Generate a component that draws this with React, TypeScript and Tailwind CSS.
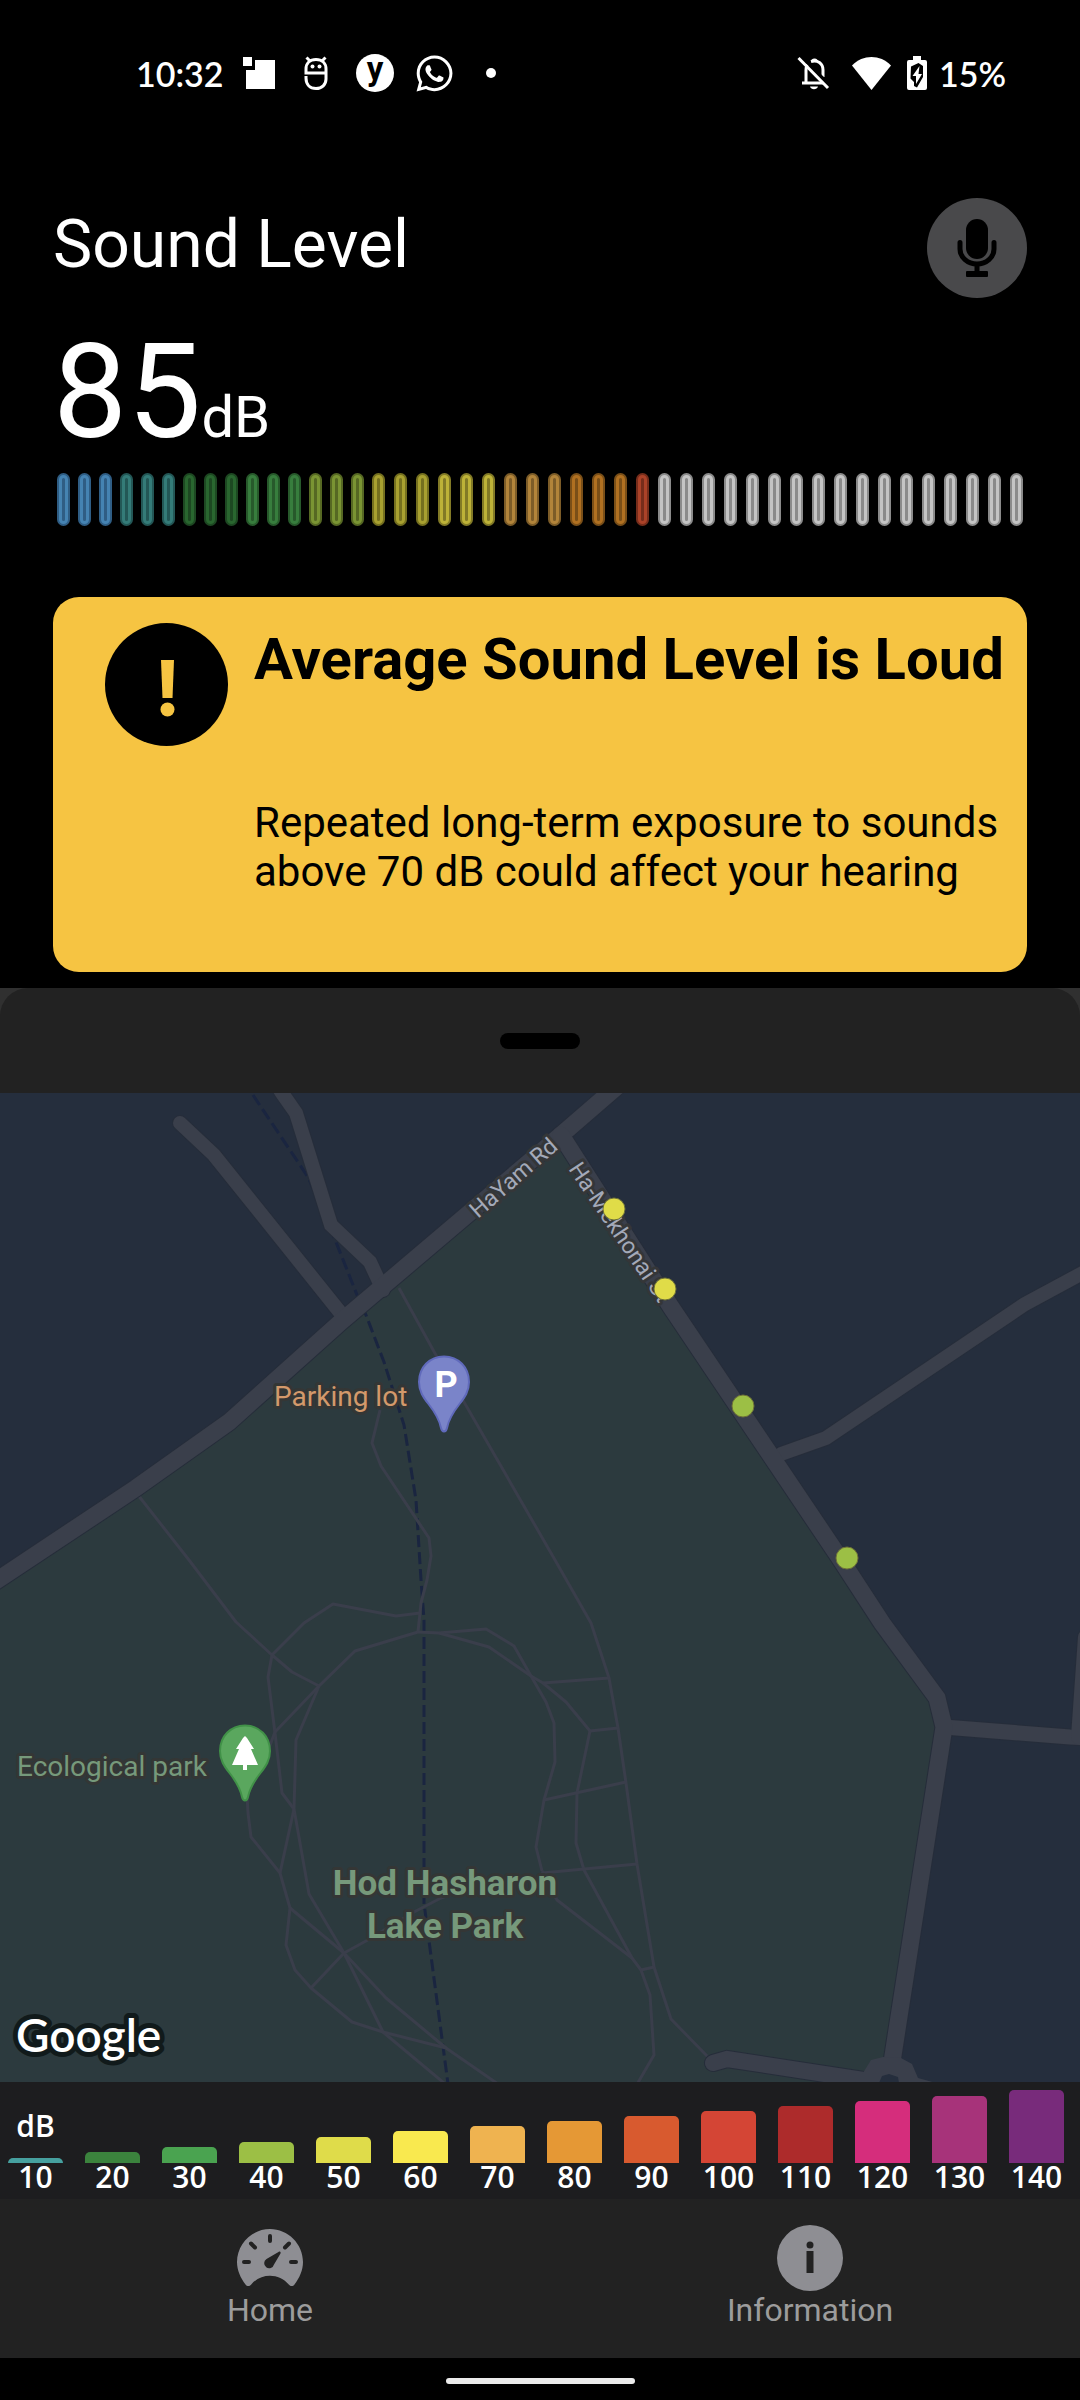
import { FaWhatsapp } from "react-icons/fa";

type Tone = { outer: string; ring: string };

const TONES: Record<string, Tone> = {
  blue: { outer: "border-[#2f5d84] bg-[#2f5d84]", ring: "border-[#4583b2]" },
  teal: { outer: "border-[#235756] bg-[#235756]", ring: "border-[#347b78]" },
  forest: { outer: "border-[#1d4822] bg-[#1d4822]", ring: "border-[#29662f]" },
  green: { outer: "border-[#27592b] bg-[#27592b]", ring: "border-[#377d3d]" },
  olive: { outer: "border-[#566823] bg-[#566823]", ring: "border-[#7a9433]" },
  lime: { outer: "border-[#75701f] bg-[#75701f]", ring: "border-[#a8a030]" },
  yellow: { outer: "border-[#827a26] bg-[#827a26]", ring: "border-[#bdb238]" },
  tan: { outer: "border-[#7c5c28] bg-[#7c5c28]", ring: "border-[#b2843a]" },
  orange: { outer: "border-[#7a4f18] bg-[#7a4f18]", ring: "border-[#b07021]" },
  red: { outer: "border-[#762d1b] bg-[#762d1b]", ring: "border-[#ab4228]" },
  off: { outer: "border-[#8a8a8a] bg-[#8a8a8a]", ring: "border-[#c4c4c4]" },
};

const times = (n: number, tone: string) => Array<string>(n).fill(tone);

const LOW_TICKS = [
  ...times(3, "blue"),
  ...times(3, "teal"),
  ...times(3, "forest"),
  ...times(3, "green"),
  ...times(3, "olive"),
  ...times(1, "lime"),
];

const HIGH_TICKS = [
  ...times(2, "lime"),
  ...times(3, "yellow"),
  ...times(3, "tan"),
  ...times(3, "orange"),
  ...times(1, "red"),
  ...times(17, "off"),
];

const LEGEND = [
  { label: "10", bar: "h-[5px] bg-[#46a09f]" },
  { label: "20", bar: "h-[11px] bg-[#3b833d]" },
  { label: "30", bar: "h-[16px] bg-[#4aa350]" },
  { label: "40", bar: "h-[21px] bg-[#9cbf45]" },
  { label: "50", bar: "h-[26px] bg-[#dfdc4a]" },
  { label: "60", bar: "h-[32px] bg-[#f9e94f]" },
  { label: "70", bar: "h-[37px] bg-[#efb350]" },
  { label: "80", bar: "h-[42px] bg-[#e59835]" },
  { label: "90", bar: "h-[47px] bg-[#d85a2f]" },
  { label: "100", bar: "h-[52px] bg-[#d44535]" },
  { label: "110", bar: "h-[57px] bg-[#ad2b2b]" },
  { label: "120", bar: "h-[62px] bg-[#d52d7c]" },
  { label: "130", bar: "h-[67px] bg-[#a7337a]" },
  { label: "140", bar: "h-[73px] bg-[#782b7b]" },
];

const ROADS = [
  { d: "M180 1123L214 1155L343 1316", w: 14 },
  { d: "M275 1082L282 1093L296 1113L331 1225L370 1262L383 1290", w: 14 },
  { d: "M781 1454L826 1438L1025 1304L1090 1269", w: 14 },
  { d: "M944 1727L1070 1737L1090 1738", w: 15 },
  { d: "M1085 1637L1078 1737", w: 14 },
  { d: "M713 2063L727 2059L870 2081", w: 16 },
  { d: "M-10 1585L136 1488L229 1422L343 1320L561 1135L650 1058", w: 17 },
  { d: "M561 1135L671 1307L841 1560L882 1623L937 1698L944 1727L892 2062", w: 17 },
];

const PATHS = [
  "M399 1288L437 1357L464 1402L555 1560L591 1623L609 1678L618 1728L626 1783L637 1864L654 1967L671 2019L708 2057",
  "M138 1495L189 1560L236 1622L272 1655L292 1672L319 1686",
  "M380 1410L372 1443L381 1466L429 1538L431 1556L427 1580L421 1603L418 1632",
  "M420 1613L396 1616L333 1604L304 1623L272 1655L268 1677L275 1733L282 1793L294 1809",
  "M418 1632L355 1651L319 1686L296 1740L294 1809L309 1894L344 1953L383 2032L450 2088",
  "M319 1686L275 1732L266 1756L247 1795L248 1813L251 1837L280 1873L290 1908L286 1945L295 1970L311 1988L352 2022L383 2032L446 2048L498 2084",
  "M294 1809L280 1873",
  "M290 1908L344 1953L386 1998L446 2048",
  "M311 1988L344 1953L366 1941L414 1912L441 1898L470 1888",
  "M542 1871L557 1900L632 1958",
  "M418 1632L439 1633L486 1629L514 1646L531 1676L546 1702L554 1723L555 1762L544 1800L536 1847L542 1871",
  "M439 1633L489 1647L531 1676L543 1683L566 1702L590 1731L577 1793L576 1843L584 1870L632 1958L641 1970L650 1995L654 2055L636 2086",
  "M543 1683L609 1678",
  "M590 1731L618 1728",
  "M544 1800L626 1782",
  "M542 1873L637 1864",
  "M641 1970L654 1967",
];

const DOTS = [
  { x: 614, y: 1209, fill: "#e0dc48" },
  { x: 665, y: 1289, fill: "#e0dc48" },
  { x: 743, y: 1406, fill: "#9cbf45" },
  { x: 847, y: 1558, fill: "#9cbf45" },
];

function Ticks({ tones }: { tones: string[] }) {
  return (
    <>
      {tones.map((tone, i) => (
        <span key={i} className="flex flex-1 justify-center">
          <span className={`h-[53px] w-[13px] rounded-full border-2 ${TONES[tone].outer}`}>
            <span className={`block h-full w-full rounded-full border-3 ${TONES[tone].ring}`} />
          </span>
        </span>
      ))}
    </>
  );
}

function StatusBar() {
  return (
    <header className="flex h-[146px] items-center justify-between pl-[136px] pr-[74px] font-['Lato',sans-serif] text-[34px] font-semibold text-white">
      <div className="flex items-center">
        <span>10:32</span>
        <svg className="ml-[19px] h-8 w-8" viewBox="0 0 32 32" fill="currentColor" aria-hidden="true">
          <path d="M0 0h9v9H0zM12 3h20v29H3V13h9z" />
        </svg>
        <svg className="ml-[29px] h-[34px] w-6" viewBox="0 0 24 34" fill="none" stroke="currentColor" strokeWidth="3" aria-hidden="true">
          <path d="M22 16v-3C22 7 18 3.500 12 3.500S2 7 2 13v4h20V23c0 5.500-4 9.500-10 9.500S2 28.500 2 22v-2M2.500 1.500L6 5M21.500 1.500L18 5" />
          <circle cx="8.500" cy="10.500" r="2" fill="currentColor" stroke="none" />
          <circle cx="15.500" cy="10.500" r="2" fill="currentColor" stroke="none" />
        </svg>
        <svg className="ml-[28px] h-[38px] w-[38px] overflow-visible" viewBox="0 0 38 38" aria-hidden="true">
          <circle cx="19" cy="19" r="19" fill="#fff" />
          <text x="19" y="26" textAnchor="middle" fontFamily="Roboto, sans-serif" fontSize="33" fontWeight="700" fill="#000">y</text>
        </svg>
        <FaWhatsapp className="ml-5 h-[41px] w-[41px]" aria-hidden="true" />
        <span className="ml-[31px] h-[10px] w-[10px] rounded-full bg-white" />
      </div>
      <div className="flex items-center">
        <svg className="h-[34px] w-[33px]" viewBox="0 0 33 34" fill="none" stroke="currentColor" strokeWidth="3" aria-hidden="true">
          <path d="M5 27h21M9 26V14c0-2 .5-4 1.500-5.500M14 5.500c6.500-2 12 2 12 8.500v7" />
          <path d="M14 6a3.500 3.500 0 1 1 7 0zM13 30.500h8c-1 3.500-7 3.500-8 0z" fill="currentColor" stroke="none" />
          <path d="M3.500 0L33 29" stroke="#000" strokeWidth="3" />
          <path d="M1.500 2L31 32" />
        </svg>
        <svg className="ml-[22px] h-[33px] w-[39px]" viewBox="0 0 39 33" fill="currentColor" aria-hidden="true">
          <path d="M0 8.500C11-2.800 28-2.800 39 8.500L19.500 33z" />
        </svg>
        <svg className="ml-4 h-[34px] w-5" viewBox="0 0 20 34" aria-hidden="true">
          <path d="M6 0h8v4h4a2 2 0 0 1 2 2v26a2 2 0 0 1-2 2H2a2 2 0 0 1-2-2V6a2 2 0 0 1 2-2h4z" fill="#fff" />
          <path d="M11.500 7L4 10.500l-.5 12L7 26v4l3 1.500L16 21V10z" fill="#000" />
          <path d="M12.500 10L5.500 20h3.500v8L15 18h-3.500z" fill="#fff" />
        </svg>
        <span className="ml-3">15%</span>
      </div>
    </header>
  );
}

function MicIcon() {
  return (
    <svg className="h-[58px] w-10" viewBox="0 0 40 58" aria-hidden="true">
      <rect x="9" y="0" width="22" height="40" rx="11" />
      <path d="M3 23.500v6.500a17 15 0 0 0 34 0v-6.500" fill="none" stroke="#000" strokeWidth="5" strokeLinecap="round" />
      <path d="M17.500 45h5v8h-5z" />
      <rect x="9" y="52" width="22" height="6" rx="1" />
    </svg>
  );
}

function Pin({ x, y, fill, stroke }: { x: number; y: number; fill: string; stroke: string }) {
  return (
    <path
      transform={`translate(${x} ${y})`}
      d="M0 -25.500C14.500 -25.500 25 -14.500 25 0C25 9 21 15 15.500 22C10 29 5 36 3 46C2 50.500 -2 50.500 -3 46C-5 36 -10 29 -15.500 22C-21 15 -25 9 -25 0C-25 -14.500 -14.500 -25.500 0 -25.500Z"
      fill={fill}
      stroke={stroke}
      strokeWidth="2"
    />
  );
}

function ParkMap() {
  return (
    <svg
      className="block h-auto w-full bg-[#252e3d]"
      viewBox="0 1093 1080 989"
      role="img"
      aria-label="Map of measured sound levels"
      fontFamily="Roboto, sans-serif"
    >
      <path
        d="M0 1578L136 1488L229 1422L343 1320L561 1137L671 1307L841 1560L882 1623L937 1698L944 1727L892 2057L885 2082H0Z"
        fill="#2c3a3e"
      />
      <path
        d="M253 1095L308 1177L334 1237L359 1300L366 1315L384 1362L404 1425L416 1500L421 1580L424 1620V1903L448 2084"
        fill="none"
        stroke="#1a2540"
        strokeWidth="3"
        strokeDasharray="12 5"
      />
      <g fill="none" stroke="#3a3e4b" strokeWidth="3" strokeLinejoin="round">
        {PATHS.map((d) => (
          <path key={d} d={d} />
        ))}
      </g>
      <g fill="none" stroke="#262d3a" strokeLinecap="round">
        {ROADS.map((r) => (
          <path key={r.d} d={r.d} strokeWidth={r.w + 2} />
        ))}
      </g>
      <g fill="none" stroke="#3a3f4b" strokeLinecap="round">
        {ROADS.map((r) => (
          <path key={r.d} d={r.d} strokeWidth={r.w} />
        ))}
      </g>
      <path d="M855 2082L863 2073L871 2060L883 2057L901 2058L912 2064L918 2078L936 2083Z" fill="#3a3f4b" />
      <path d="M879 2083L882 2076L889 2074L898 2077L899 2083Z" fill="#252e3d" />

      <g fill="#a3a9b8" stroke="#343638" strokeWidth="6" strokeLinejoin="round" paintOrder="stroke" fontSize="23">
        <text transform="translate(478 1219) rotate(-41)">HaYam Rd</text>
        <text transform="translate(568 1169) rotate(56)">Ha-Mekhonai St</text>
      </g>
      {DOTS.map((d) => (
        <circle key={d.x} cx={d.x} cy={d.y} r="11" fill={d.fill} stroke="#6d7038" strokeWidth="1" />
      ))}

      <Pin x={444} y={1382} fill="#7a84c9" stroke="#606abb" />
      <text x="446" y="1397" textAnchor="middle" fontSize="36" fontWeight="700" fill="#fff">P</text>
      <Pin x={245} y={1751} fill="#5aa75e" stroke="#419148" />
      <path d="M243 1738l2-2l2 2l7 11h-3l7 16h-11v5h-4v-5h-11l7-16h-3z" fill="#fff" />

      <g stroke="#343635" strokeWidth="6" strokeLinejoin="round" paintOrder="stroke">
        <text x="274" y="1406" fontSize="28" fill="#d3996b">Parking lot</text>
        <text x="17" y="1776" fontSize="28" fill="#76997b">Ecological park</text>
        <g fontSize="35" fontWeight="700" fill="#76997b" textAnchor="middle">
          <text x="445" y="1895">Hod Hasharon</text>
          <text x="445" y="1938">Lake Park</text>
        </g>
      </g>
      <text
        x="16"
        y="2052"
        fontFamily="Lato, sans-serif"
        fontSize="46"
        fontWeight="600"
        fill="#fff"
        stroke="#111a1b"
        strokeWidth="10"
        strokeLinejoin="round"
        paintOrder="stroke"
      >
        Google
      </text>
    </svg>
  );
}

function Legend() {
  return (
    <ul className="flex h-[117px] items-end justify-between bg-[#1d1d1f] pb-2 pl-2 pr-4 font-['Open_Sans',sans-serif] text-[30px] font-semibold leading-7 text-white">
      {LEGEND.map((item, i) => (
        <li key={item.label} className="flex w-[55px] flex-col items-center">
          {i === 0 && <span className="mb-[18px]">dB</span>}
          <span className={`w-full rounded-t-[5px] ${item.bar}`} />
          <span>{item.label}</span>
        </li>
      ))}
    </ul>
  );
}

function GaugeIcon() {
  return (
    <svg className="h-[66px] w-[66px]" viewBox="0 0 66 66" aria-hidden="true">
      <path
        d="M33 4C51 4 66 19 66 37c0 8-3.500 16-8.500 22.500c-1.500 2-4 2-5.500.2c-10-12-28-12-38 0c-1.500 1.800-4 1.800-5.500-.2C3.500 53 0 45 0 37C0 19 15 4 33 4z"
        fill="#8e8e93"
      />
      <path d="M33 11v5M14 18.500l4 4M52 18.500l-4 4M7 37h5M54 37h5" stroke="#222" strokeWidth="4" strokeLinecap="round" />
      <path d="M41.500 27c1.500-1 2.500 0 2 1.500L37 39.500a5 5 0 1 1-7.500-5.500z" fill="#222" />
    </svg>
  );
}

function InfoIcon() {
  return (
    <svg className="h-[66px] w-[66px]" viewBox="0 0 66 66" aria-hidden="true">
      <circle cx="33" cy="33" r="33" fill="#8e8e93" />
      <circle cx="33" cy="20" r="3.500" fill="#222" />
      <rect x="29.500" y="26" width="7" height="22" fill="#222" />
    </svg>
  );
}

export default function App() {
  return (
    <div className="flex min-h-screen flex-col bg-black font-['Roboto',sans-serif]">
      <StatusBar />

      <main className="flex flex-col">
        <div className="mt-[52px] flex items-start justify-between px-[53px]">
          <h1 className="text-[66px] leading-[94px] text-white">Sound Level</h1>
          <button type="button" aria-label="Microphone" className="flex h-[100px] w-[100px] items-center justify-center rounded-full bg-[#49494b]">
            <MicIcon />
          </button>
        </div>

        <p className="mt-7 flex items-baseline px-[53px] text-white">
          <span className="text-[132px] leading-[132px]">85</span>
          <span className="text-[58px] leading-none">dB</span>
        </p>

        <div className="mt-[15px] flex px-[53px]" role="img" aria-label="Sound level 85 dB">
          <div className="flex flex-[336]">
            <Ticks tones={LOW_TICKS} />
          </div>
          <div className="flex flex-[638]">
            <Ticks tones={HIGH_TICKS} />
          </div>
        </div>

        <section className="mx-[53px] mt-[71px] flex rounded-[26px] bg-[#f6c442] pb-[76px] pl-[52px] pr-5 pt-[26px] text-black">
          <svg className="h-[123px] w-[123px] shrink-0" viewBox="0 0 123 123" aria-hidden="true">
            <circle cx="61.500" cy="61.500" r="61.500" />
            <path d="M56 37h13l-1.500 38h-10z" fill="#f6c442" />
            <circle cx="62.500" cy="86.500" r="7" fill="#f6c442" />
          </svg>
          <div className="ml-[26px] pt-[6px]">
            <h2 className="text-[58px] font-bold leading-[60px]">Average Sound Level is Loud</h2>
            <p className="mt-[109px] text-[42px] leading-[49px]">
              Repeated long-term exposure to sounds above 70 dB could affect your hearing
            </p>
          </div>
        </section>

        <section className="mt-4 bg-[#303030]">
          <div className="flex h-[105px] items-center justify-center rounded-t-[28px] bg-[#222222]">
            <button type="button" aria-label="Drag sheet" className="h-4 w-20 rounded-full bg-black" />
          </div>
          <ParkMap />
          <Legend />
        </section>
      </main>

      <nav className="flex h-[159px] bg-[#222222] text-[32px] leading-[38px] text-[#9c9c9c]">
        <a href="#home" className="flex flex-1 flex-col items-center pt-[26px]">
          <GaugeIcon />
          <span>Home</span>
        </a>
        <a href="#information" className="flex flex-1 flex-col items-center pt-[26px]">
          <InfoIcon />
          <span>Information</span>
        </a>
      </nav>
      <div className="flex h-[42px] items-end justify-center pb-4">
        <span className="h-[6px] w-[189px] rounded-full bg-[#ebebeb]" />
      </div>
    </div>
  );
}
